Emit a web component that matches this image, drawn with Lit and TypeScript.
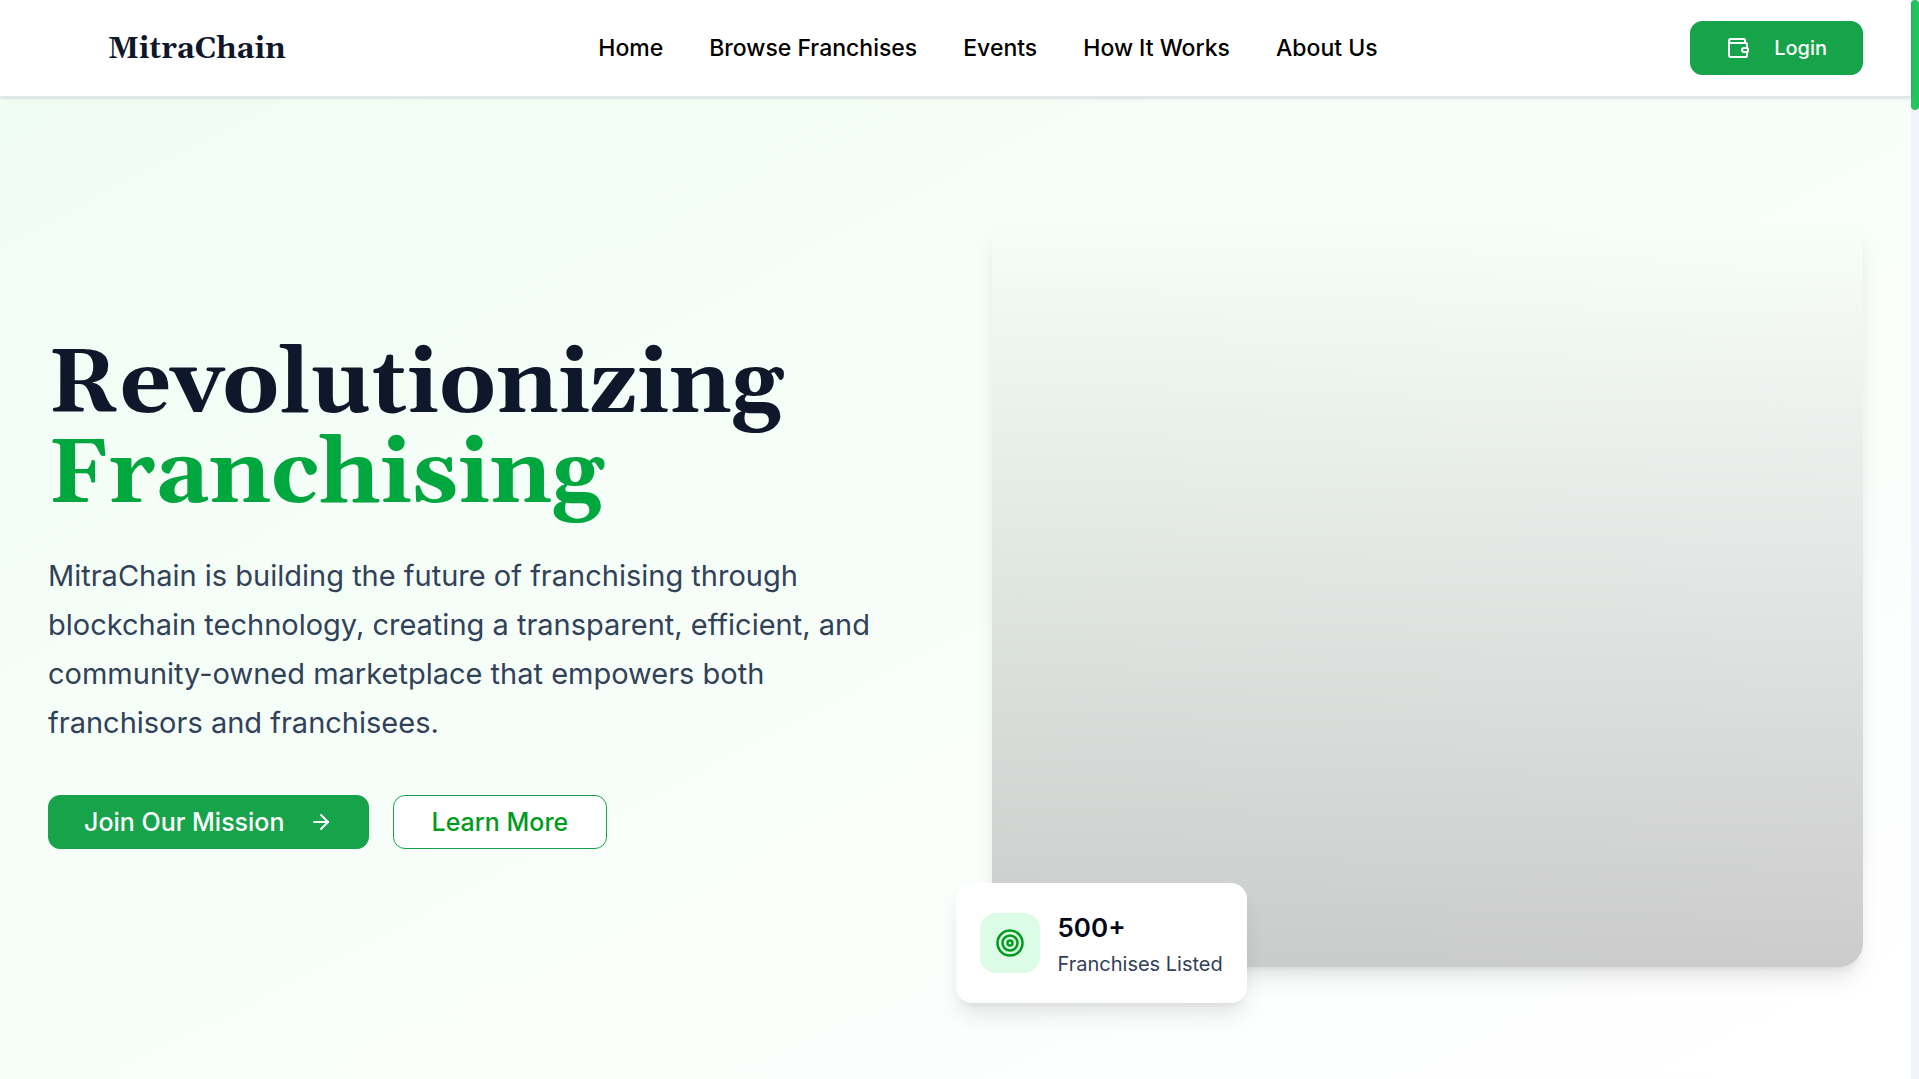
import { LitElement, html, css, svg } from "lit";
import { customElement } from "lit/decorators.js";

const navLinks = ["Home", "Browse Franchises", "Events", "How It Works", "About Us"];

const walletIcon = svg`
  <path d="M19 7V4a1 1 0 0 0-1-1H5a2 2 0 0 0 0 4h15a1 1 0 0 1 1 1v4h-3a2 2 0 0 0 0 4h3a1 1 0 0 0 1-1v-2a1 1 0 0 0-1-1"/>
  <path d="M3 5v14a2 2 0 0 0 2 2h15a1 1 0 0 0 1-1v-4"/>`;

const arrowIcon = svg`<path d="M5 12h14"/><path d="m12 5 7 7-7 7"/>`;

const targetIcon = svg`
  <circle cx="12" cy="12" r="10"/>
  <circle cx="12" cy="12" r="6"/>
  <circle cx="12" cy="12" r="2"/>`;

@customElement("app-root")
export class AppRoot extends LitElement {
  static styles = css`
    :host {
      display: flex;
      height: 100vh;
      overflow: hidden;
      background: #fff;
      font-family: Inter, "Liberation Sans", sans-serif;
      color: #0f172b;
    }
    * { box-sizing: border-box; }
    .page { flex: 1; min-width: 0; }
    .track { width: 8px; background: #f1f5f9; }
    .thumb { height: 110px; border-radius: 4px; background: #22c55e; }
    .header {
      position: relative;
      display: flex;
      align-items: center;
      justify-content: space-between;
      height: 97px;
      padding: 0 48px;
      background: #fff;
      border-bottom: 1px solid #e2e8f0;
      box-shadow: 0 1px 4px rgba(0, 0, 0, 0.16);
    }
    .brand {
      padding: 2px 0 0 60px;
      font-family: Gelasio, Georgia, "DejaVu Serif", serif;
      font-size: 30px;
      line-height: 48px;
      font-weight: 700;
      color: #0f172b;
      text-decoration: none;
    }
    .nav { display: flex; gap: 46px; }
    .link {
      font-size: 23px;
      line-height: 36px;
      font-weight: 500;
      color: #000;
      text-decoration: none;
      white-space: nowrap;
    }
    .btn {
      display: inline-flex;
      align-items: center;
      justify-content: center;
      gap: 24px;
      height: 54px;
      padding: 0 35px;
      border: 1px solid #16a34a;
      border-radius: 12px;
      background: #16a34a;
      color: #fff;
      font-family: inherit;
      font-size: 25px;
      font-weight: 500;
      white-space: nowrap;
      cursor: pointer;
    }
    .login { font-size: 20px; }
    .outline { padding: 0 38px; background: #fff; color: #009a1c; }
    .icon {
      display: block;
      width: 24px;
      height: 24px;
      flex: none;
      fill: none;
      stroke: currentColor;
      stroke-width: 2;
      stroke-linecap: round;
      stroke-linejoin: round;
    }
    .hero {
      display: grid;
      grid-template-columns: 1fr 1fr;
      gap: 72px;
      align-items: center;
      padding: 120px 48px;
      background: linear-gradient(to bottom right, #f0fdf4, #fff);
    }
    .title {
      margin: 0 0 30px;
      padding-top: 6px;
      font-family: Gelasio, Georgia, "DejaVu Serif", serif;
      font-size: 90px;
      line-height: 90px;
      font-weight: 700;
    }
    .accent { display: block; color: #00a63e; }
    .lead {
      margin: 0 0 48px;
      font-size: 29px;
      line-height: 49px;
      color: #314158;
    }
    .actions { display: flex; gap: 24px; }
    .visual { position: relative; height: 750px; }
    .panel {
      height: 100%;
      border-radius: 24px;
      background: linear-gradient(to top, rgba(0, 0, 0, 0.2), transparent);
      box-shadow: 0 15px 22px -4px rgba(0, 0, 0, 0.1), 0 6px 9px -6px rgba(0, 0, 0, 0.1);
    }
    .stat {
      position: absolute;
      left: -36px;
      bottom: -36px;
      display: flex;
      align-items: center;
      gap: 18px;
      height: 120px;
      padding: 0 24px;
      border-radius: 16px;
      background: #fff;
      box-shadow: 0 15px 22px -4px rgba(0, 0, 0, 0.1), 0 6px 9px -6px rgba(0, 0, 0, 0.1);
    }
    .badge {
      display: grid;
      place-items: center;
      width: 60px;
      height: 60px;
      border-radius: 16px;
      background: #dcfce7;
      color: #009a1c;
    }
    .target { width: 30px; height: 30px; }
    .figures { padding-top: 6px; }
    .value { margin: 0; font-size: 26px; line-height: 36px; font-weight: 600; color: #020618; }
    .label { margin: 0; font-size: 20px; line-height: 36px; color: #314158; white-space: nowrap; }
  `;

  render() {
    return html`
      <div class="page">
        <header class="header">
          <a class="brand" href="#">MitraChain</a>
          <nav class="nav">
            ${navLinks.map((label) => html`<a class="link" href="#">${label}</a>`)}
          </nav>
          <button class="btn login" type="button">
            <svg class="icon" viewBox="0 0 24 24" aria-hidden="true">${walletIcon}</svg>
            Login
          </button>
        </header>
        <main class="hero">
          <section>
            <h1 class="title">Revolutionizing <span class="accent">Franchising</span></h1>
            <p class="lead">
              MitraChain is building the future of franchising through blockchain technology,
              creating a transparent, efficient, and community-owned marketplace that empowers
              both franchisors and franchisees.
            </p>
            <div class="actions">
              <button class="btn" type="button">
                Join Our Mission
                <svg class="icon" viewBox="0 0 24 24" aria-hidden="true">${arrowIcon}</svg>
              </button>
              <button class="btn outline" type="button">Learn More</button>
            </div>
          </section>
          <section class="visual">
            <div class="panel"></div>
            <div class="stat">
              <div class="badge">
                <svg class="icon target" viewBox="0 0 24 24" aria-hidden="true">${targetIcon}</svg>
              </div>
              <div class="figures">
                <p class="value">500+</p>
                <p class="label">Franchises Listed</p>
              </div>
            </div>
          </section>
        </main>
      </div>
      <div class="track"><div class="thumb"></div></div>
    `;
  }
}
